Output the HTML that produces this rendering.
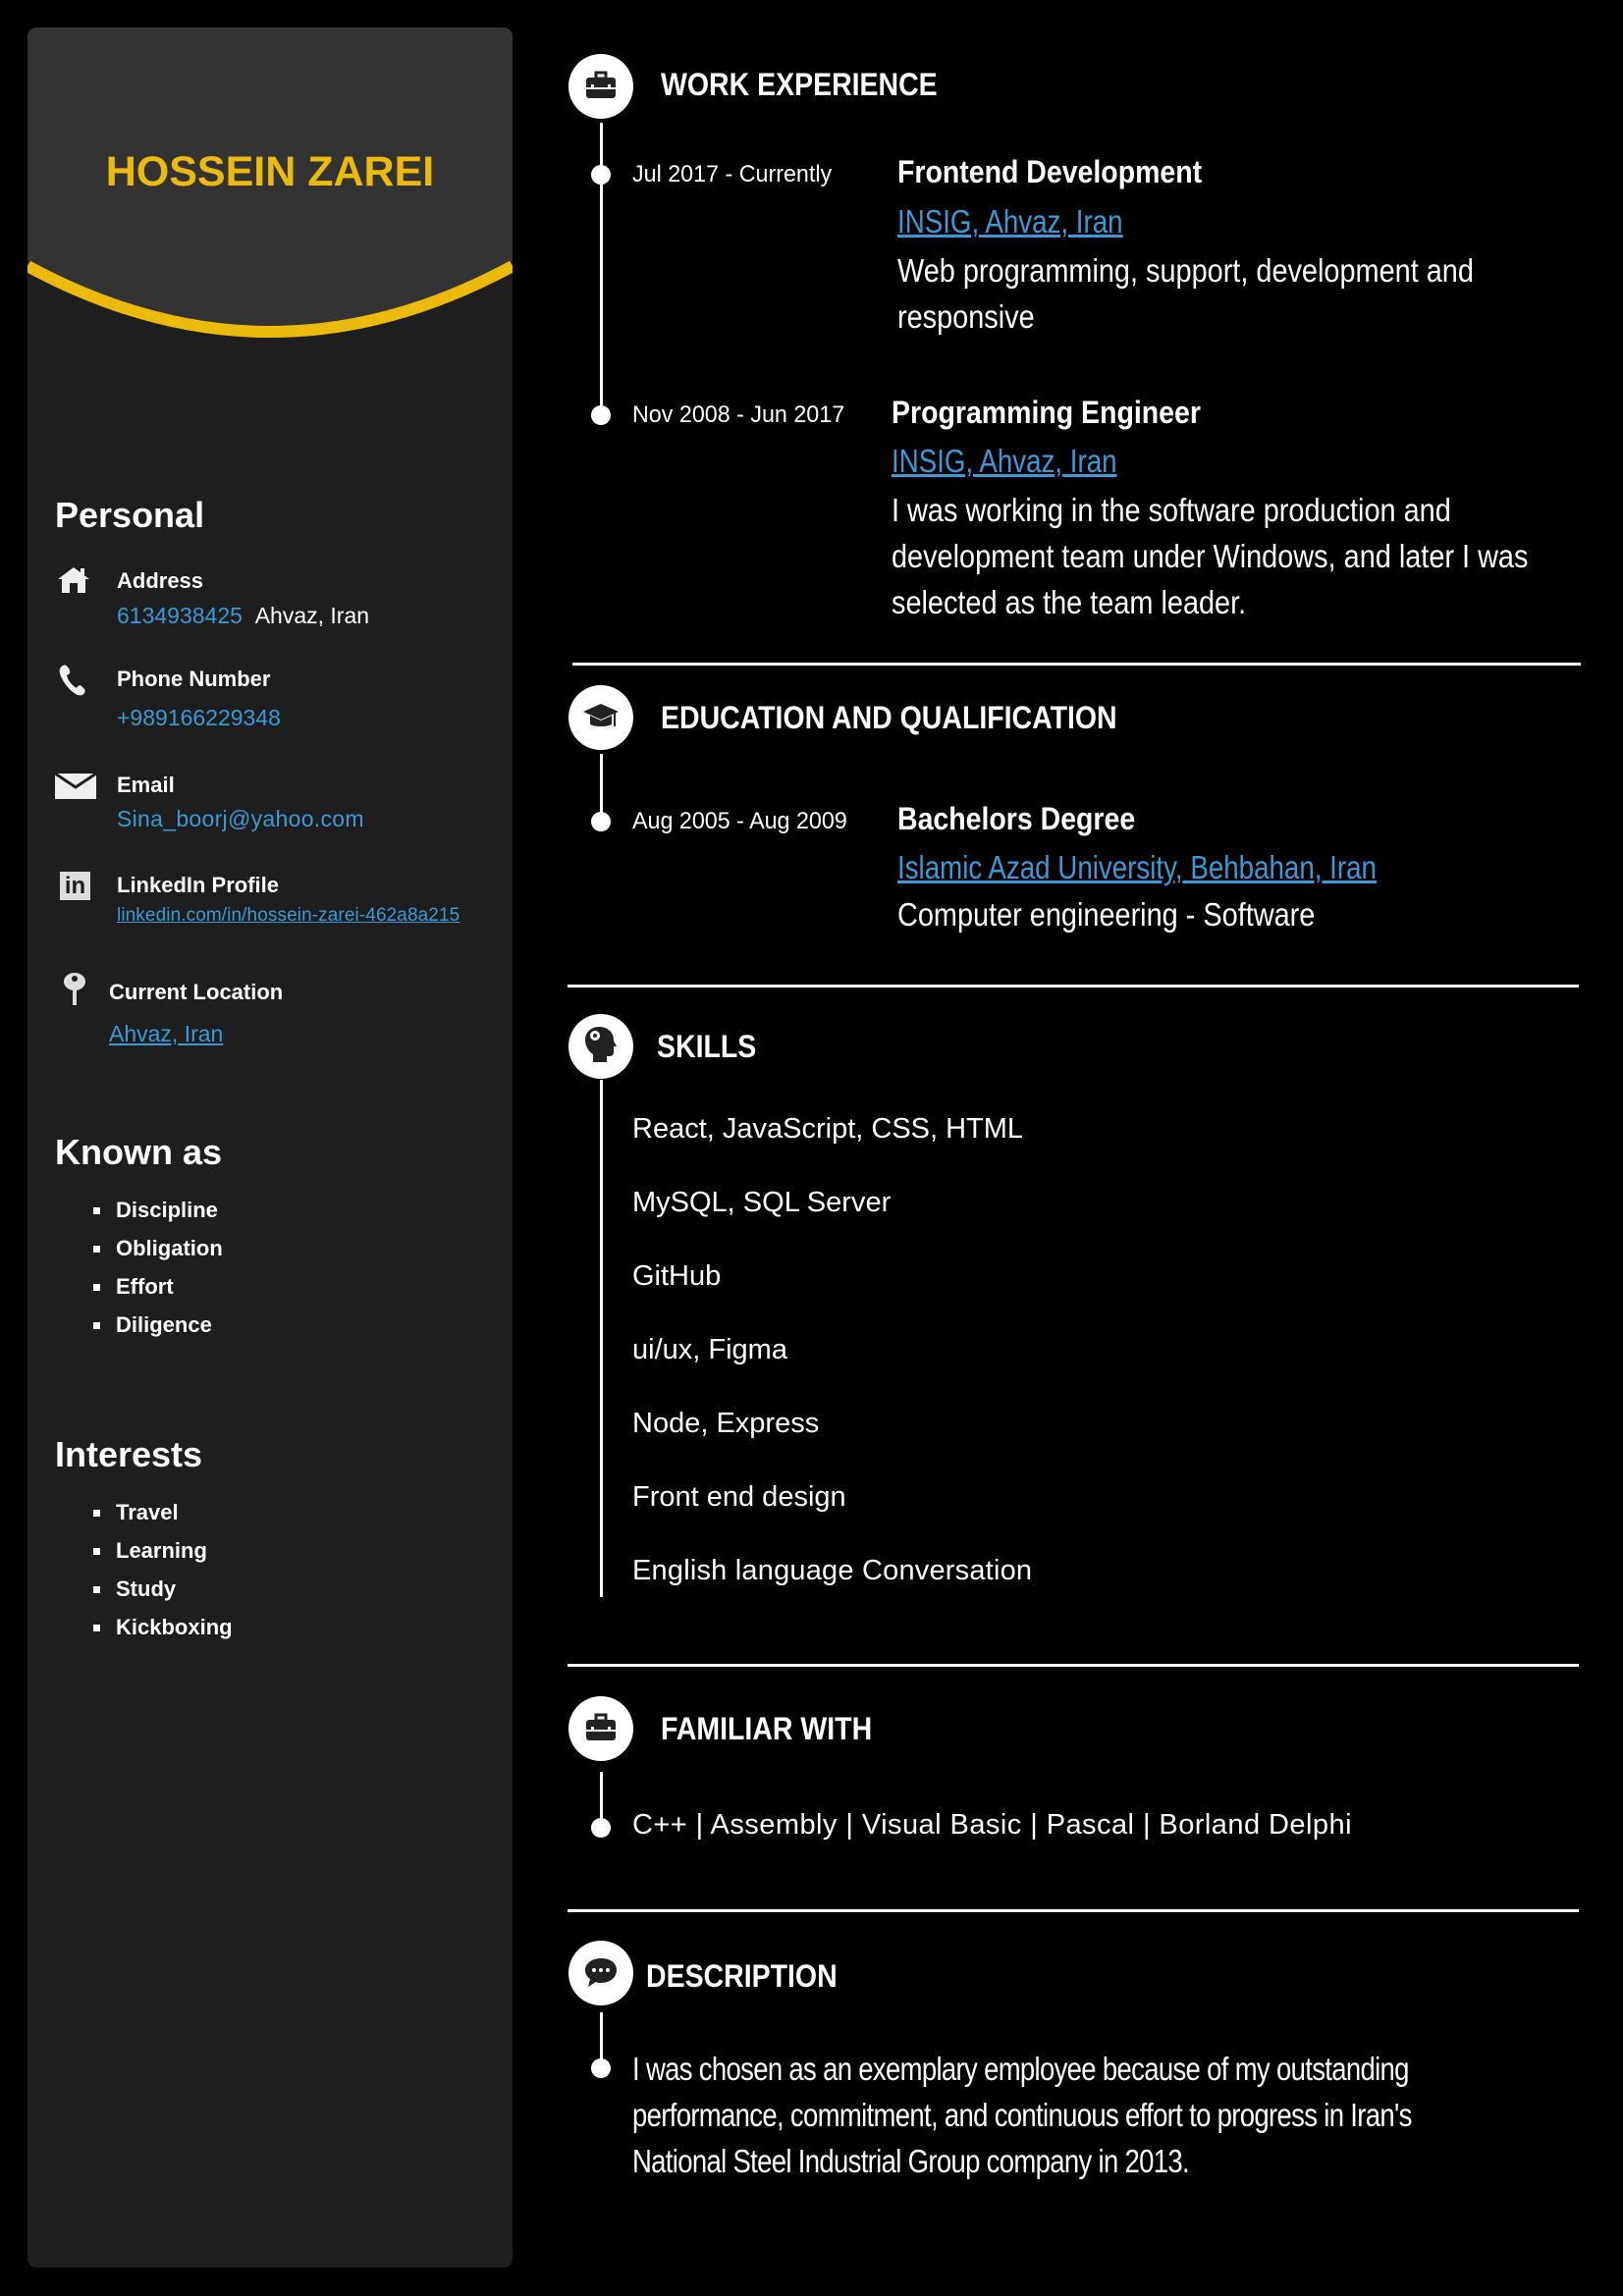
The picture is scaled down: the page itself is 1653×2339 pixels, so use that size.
<!DOCTYPE html>
<html><head><meta charset="utf-8"><style>
*{margin:0;padding:0;box-sizing:border-box}
body{width:1653px;height:2339px;background:#000;position:relative;overflow:hidden;font-family:"Liberation Sans",sans-serif;color:#fff}
.a{position:absolute;white-space:nowrap;transform-origin:0 50%}
.side{position:absolute;left:28px;top:28px;width:494px;height:2282px;background:#1e1e1e;border-radius:9px;overflow:hidden}
.lbl{font-weight:bold;font-size:22px;line-height:30px}
.val{font-size:23px;line-height:30px;color:#3b9ad6}
.h2{font-size:36px;font-weight:bold;line-height:44px}
.li{font-size:22px;font-weight:bold;line-height:30px}
.bul{position:absolute;width:7px;height:7px;background:#fff}
.circ{position:absolute;width:66px;height:66px;border-radius:50%;background:#fff}
.sec{font-size:32px;font-weight:bold;line-height:40px;transform:scaleX(.89)}
.vl{position:absolute;width:3px;background:#fff;left:611px}
.dot{position:absolute;width:20px;height:20px;border-radius:50%;background:#fff;left:602px}
.hr{position:absolute;height:3px;background:#fff}
.date{font-size:24px;line-height:30px;transform:scaleX(.97)}
.jt{font-size:32px;font-weight:bold;line-height:40px;transform:scaleX(.89)}
.lk{font-size:33px;line-height:40px;color:#3b9ad6;text-decoration:underline;transform:scaleX(.84)}
.tx{font-size:33px;line-height:47px;transform:scaleX(.875)}
.ds{font-size:33px;line-height:47px;transform:scaleX(.833);letter-spacing:-.8px}
.sk{font-size:29px;line-height:40px}
</style></head><body>
<div class="side">
<svg width="494" height="400" style="position:absolute;left:0;top:0">
<path d="M0 0H494V237Q247 371 0 237Z" fill="#333"/>
<path d="M0 243Q247 377 494 243" stroke="#ebba0a" stroke-width="12" fill="none"/>
</svg>
<div class="a" style="left:0;width:494px;text-align:center;top:120px;font-size:43px;font-weight:bold;color:#ebba0a;line-height:54px">HOSSEIN ZAREI</div>
</div>
<div class="a h2" style="left:56px;top:503px">Personal</div>
<svg class="a" style="left:57px;top:576px" width="36" height="30" viewBox="0 0 36 30"><path d="M18 2L2 14h4v14h24V14h4L18 2z" fill="#eee"/><rect x="14" y="18" width="8" height="10" fill="#1e1e1e"/><rect x="25" y="3" width="4" height="7" fill="#eee"/></svg>
<div class="a lbl" style="left:119px;top:577px">Address</div>
<div class="a val" style="left:119px;top:612px">6134938425 <span style="color:#fff">&nbsp;Ahvaz, Iran</span></div>
<svg class="a" style="left:58px;top:676px" width="36" height="36" viewBox="0 0 36 36"><path d="M6 2c3-2 6 2 7 5s-1 4-3 5c1 5 5 10 10 13 1-2 3-4 5-2s5 4 3 7c-2 3-6 3-9 1C11 26 5 17 3 10 2 6 3 4 6 2z" fill="#eee"/></svg>
<div class="a lbl" style="left:119px;top:677px">Phone Number</div>
<div class="a val" style="left:119px;top:716px">+989166229348</div>
<svg class="a" style="left:56px;top:788px" width="42" height="26" viewBox="0 0 42 26"><rect width="42" height="26" fill="#eee"/><path d="M0 0L21 14L42 0" stroke="#1e1e1e" stroke-width="3" fill="none"/></svg>
<div class="a lbl" style="left:119px;top:785px">Email</div>
<div class="a val" style="left:119px;top:819px;letter-spacing:.3px">Sina_boorj@yahoo.com</div>
<div class="a" style="left:61px;top:888px;width:31px;height:29px;background:#ddd;color:#1e1e1e;font-weight:bold;font-size:24px;line-height:29px;text-align:center">in</div>
<div class="a lbl" style="left:119px;top:887px">LinkedIn Profile</div>
<div class="a" style="left:119px;top:922px;font-size:19px;line-height:22px;color:#3b9ad6;text-decoration:underline;letter-spacing:.1px">linkedin.com/in/hossein-zarei-462a8a215</div>
<svg class="a" style="left:64px;top:990px" width="24" height="36" viewBox="0 0 24 36"><ellipse cx="12" cy="10" rx="11" ry="9" fill="#ddd"/><circle cx="12" cy="7" r="3" fill="#1e1e1e"/><rect x="10" y="16" width="4" height="18" fill="#ddd"/></svg>
<div class="a lbl" style="left:111px;top:996px">Current Location</div>
<div class="a val" style="left:111px;top:1038px;text-decoration:underline">Ahvaz, Iran</div>
<div class="a h2" style="left:56px;top:1152px">Known as</div>
<div class="bul" style="left:95px;top:1230px"></div><div class="a li" style="left:118px;top:1218px">Discipline</div>
<div class="bul" style="left:95px;top:1269px"></div><div class="a li" style="left:118px;top:1257px">Obligation</div>
<div class="bul" style="left:95px;top:1308px"></div><div class="a li" style="left:118px;top:1296px">Effort</div>
<div class="bul" style="left:95px;top:1347px"></div><div class="a li" style="left:118px;top:1335px">Diligence</div>
<div class="a h2" style="left:56px;top:1460px">Interests</div>
<div class="bul" style="left:95px;top:1538px"></div><div class="a li" style="left:118px;top:1526px">Travel</div>
<div class="bul" style="left:95px;top:1577px"></div><div class="a li" style="left:118px;top:1565px">Learning</div>
<div class="bul" style="left:95px;top:1616px"></div><div class="a li" style="left:118px;top:1604px">Study</div>
<div class="bul" style="left:95px;top:1655px"></div><div class="a li" style="left:118px;top:1643px">Kickboxing</div>

<!-- WORK -->
<div class="circ" style="left:579px;top:55px"></div>
<svg class="a" style="left:596px;top:72px" width="32" height="30" viewBox="0 0 32 30"><rect x="11" y="2" width="10" height="6" fill="none" stroke="#222" stroke-width="3"/><rect x="1" y="7" width="30" height="21" rx="3" fill="#222"/><rect x="1" y="17" width="30" height="2" fill="#fff"/><rect x="6" y="14" width="3" height="5" fill="#fff"/><rect x="23" y="14" width="3" height="5" fill="#fff"/></svg>
<div class="a sec" style="left:673px;top:66px">WORK EXPERIENCE</div>
<div class="vl" style="top:125px;height:300px"></div>
<div class="dot" style="top:168px"></div>
<div class="a date" style="left:644px;top:163px">Jul 2017 - Currently</div>
<div class="a jt" style="left:914px;top:155px">Frontend Development</div>
<div class="a lk" style="left:914px;top:206px">INSIG, Ahvaz, Iran</div>
<div class="a tx" style="left:914px;top:252px">Web programming, support, development and<br>responsive</div>
<div class="dot" style="top:413px"></div>
<div class="a date" style="left:644px;top:408px">Nov 2008 - Jun 2017</div>
<div class="a jt" style="left:908px;top:400px">Programming Engineer</div>
<div class="a lk" style="left:908px;top:450px">INSIG, Ahvaz, Iran</div>
<div class="a tx" style="left:908px;top:496px">I was working in the software production and<br>development team under Windows, and later I was<br>selected as the team leader.</div>
<div class="hr" style="left:583px;width:1027px;top:675px"></div>

<!-- EDU -->
<div class="circ" style="left:579px;top:698px"></div>
<svg class="a" style="left:593px;top:714px" width="38" height="34" viewBox="0 0 38 34"><path d="M19 3L1 11l18 8 18-8z" fill="#222"/><path d="M8 15v8c0 4 22 4 22 0v-8l-11 5z" fill="#222"/><rect x="32" y="12" width="2" height="14" fill="#222"/></svg>
<div class="a sec" style="left:673px;top:711px">EDUCATION AND QUALIFICATION</div>
<div class="vl" style="top:768px;height:60px"></div>
<div class="dot" style="top:827px"></div>
<div class="a date" style="left:644px;top:822px">Aug 2005 - Aug 2009</div>
<div class="a jt" style="left:914px;top:814px">Bachelors Degree</div>
<div class="a lk" style="left:914px;top:864px">Islamic Azad University, Behbahan, Iran</div>
<div class="a tx" style="left:914px;top:908px">Computer engineering - Software</div>
<div class="hr" style="left:578px;width:1030px;top:1003px"></div>

<!-- SKILLS -->
<div class="circ" style="left:579px;top:1033px"></div>
<svg class="a" style="left:594px;top:1044px" width="36" height="40" viewBox="0 0 36 40"><path d="M16 2c9 0 15 6 15 13 0 3 3 6 3 7h-3v6c0 3-2 4-5 4h-2v6H10v-8C5 27 2 21 2 15 2 8 8 2 16 2z" fill="#222"/><circle cx="12" cy="11" r="5" fill="#fff"/><circle cx="12" cy="11" r="2" fill="#222"/></svg>
<div class="a sec" style="left:669px;top:1046px">SKILLS</div>
<div class="vl" style="top:1100px;height:527px"></div>
<div class="a sk" style="left:644px;top:1130px">React, JavaScript, CSS, HTML</div>
<div class="a sk" style="left:644px;top:1205px">MySQL, SQL Server</div>
<div class="a sk" style="left:644px;top:1280px">GitHub</div>
<div class="a sk" style="left:644px;top:1355px">ui/ux, Figma</div>
<div class="a sk" style="left:644px;top:1430px">Node, Express</div>
<div class="a sk" style="left:644px;top:1505px">Front end design</div>
<div class="a sk" style="left:644px;top:1580px;letter-spacing:.2px">English language Conversation</div>
<div class="hr" style="left:578px;width:1030px;top:1695px"></div>

<!-- FAMILIAR -->
<div class="circ" style="left:579px;top:1728px"></div>
<svg class="a" style="left:596px;top:1745px" width="32" height="30" viewBox="0 0 32 30"><rect x="11" y="2" width="10" height="6" fill="none" stroke="#222" stroke-width="3"/><rect x="1" y="7" width="30" height="21" rx="3" fill="#222"/><rect x="1" y="17" width="30" height="2" fill="#fff"/><rect x="6" y="14" width="3" height="5" fill="#fff"/><rect x="23" y="14" width="3" height="5" fill="#fff"/></svg>
<div class="a sec" style="left:673px;top:1741px">FAMILIAR WITH</div>
<div class="vl" style="top:1805px;height:50px"></div>
<div class="dot" style="top:1852px"></div>
<div class="a sk" style="left:644px;top:1839px;letter-spacing:.45px">C++ | Assembly | Visual Basic | Pascal | Borland Delphi</div>
<div class="hr" style="left:578px;width:1030px;top:1945px"></div>

<!-- DESCRIPTION -->
<div class="circ" style="left:579px;top:1977px"></div>
<svg class="a" style="left:594px;top:1993px" width="36" height="34" viewBox="0 0 36 34"><path d="M18 2C8 2 2 8 2 14c0 4 2 7 5 9l-2 8 8-5c2 1 3 1 5 1 10 0 16-6 16-13S28 2 18 2z" fill="#222"/><circle cx="11" cy="14" r="2" fill="#fff"/><circle cx="18" cy="14" r="2" fill="#fff"/><circle cx="25" cy="14" r="2" fill="#fff"/></svg>
<div class="a sec" style="left:658px;top:1993px">DESCRIPTION</div>
<div class="vl" style="top:2050px;height:50px"></div>
<div class="dot" style="top:2097px"></div>
<div class="a ds" style="left:644px;top:2084px">I was chosen as an exemplary employee because of my outstanding<br>performance, commitment, and continuous effort to progress in Iran's<br>National Steel Industrial Group company in 2013.</div>
</body></html>
